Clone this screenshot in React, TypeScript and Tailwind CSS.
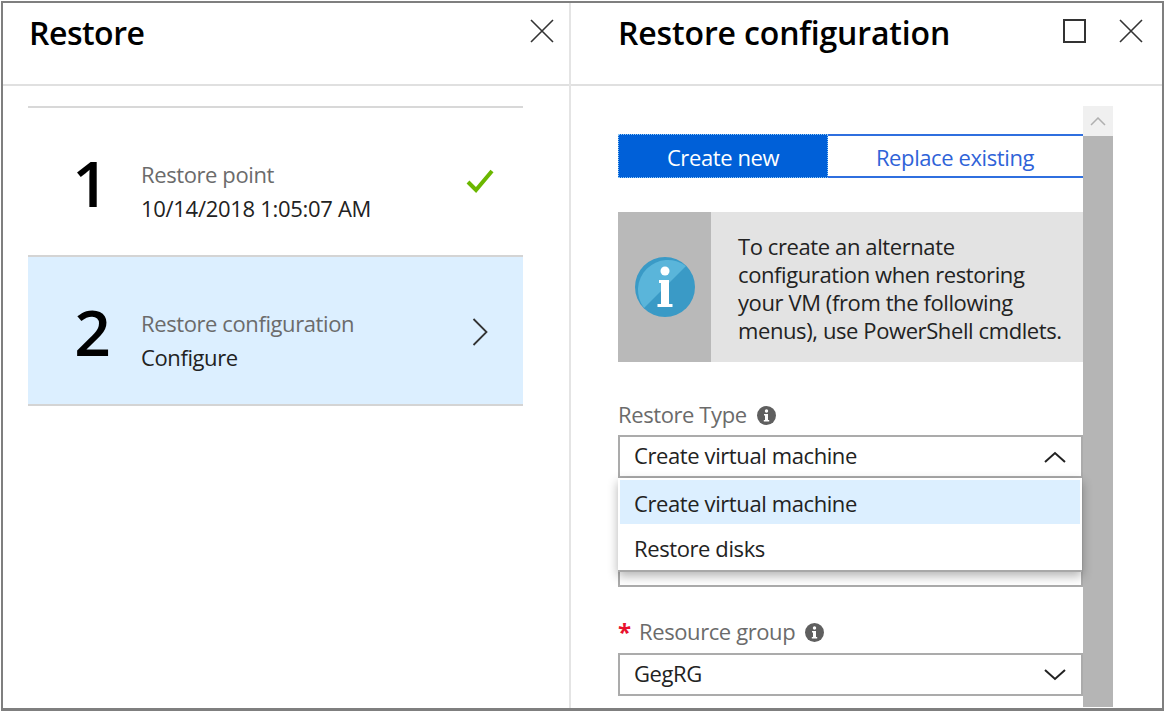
import React from "react";

const font = { fontFamily: '"Open Sans", "Noto Sans", sans-serif' };

const CloseIcon = () => (
  <svg width="24" height="24" viewBox="0 0 24 24" fill="none" stroke="#333" strokeWidth="1.6">
    <path d="M1 1l22 22M23 1L1 23" />
  </svg>
);

const Chevron = ({ up }: { up?: boolean }) => (
  <svg width="22" height="12" viewBox="0 0 22 12" fill="none" stroke="#222" strokeWidth="2">
    <path d={up ? "M1 11l10-9 10 9" : "M1 1l10 9 10-9"} />
  </svg>
);

const SmallInfo = () => (
  <svg width="19" height="19" viewBox="0 0 19 19">
    <circle cx="9.5" cy="9.5" r="9.5" fill="#5f5f5f" />
    <circle cx="9.5" cy="5" r="1.7" fill="#fff" />
    <path d="M7 8h4v6h1.2v1.6H6.8V14H8V9.6H7z" fill="#fff" />
  </svg>
);

const BigInfo = () => (
  <svg width="60" height="60" viewBox="0 0 60 60">
    <circle cx="30" cy="30" r="30" fill="#3a9ac6" />
    <path d="M9 51A30 30 0 0 1 51 9z" fill="#5ab5da" />
    <circle cx="30" cy="14" r="4.5" fill="#fff" />
    <path d="M24 23h10v24h3.5v3h-15v-3H26V26h-2z" fill="#fff" />
  </svg>
);

export default function App() {
  return (
    <div className="w-[1166px] h-[711px] bg-white pl-[1px] pt-[1px] pr-[2px]" style={font}>
      <div className="h-full bg-white flex overflow-hidden border-t-2 border-x-2 border-b-[3px] border-[#7f7f7f]">
        {/* left blade */}
        <div className="w-[568px] shrink-0 border-r-2 border-[#e4e4e4] flex flex-col">
          <div className="h-[83px] shrink-0 border-b-2 border-[#e0e0e0] pl-[26px] pr-[15px] flex justify-between">
            <h1 className="text-[32px] leading-[60px] font-semibold text-black tracking-[-0.5px]">Restore</h1>
            <div className="pt-[16px]"><CloseIcon /></div>
          </div>
          <div className="pt-[20px] pl-[25px] w-[520px]">
            <div className="border-t-2 border-[#d8d8d8] h-[149px] flex items-center">
              <div className="w-[113px] text-center text-[64px] leading-none font-semibold text-black pt-[2px] pl-[12px]">1</div>
              <div className="flex-1 pt-[18px]">
                <div className="text-[22px] leading-[34px] text-[#6b6b6b] tracking-[-0.4px]">Restore point</div>
                <div className="text-[22px] leading-[34px] text-[#222] tracking-[-0.3px]">10/14/2018 1:05:07 AM</div>
              </div>
              <svg className="mr-[29px] mb-[2px]" width="28" height="24" viewBox="0 0 28 24" fill="none" stroke="#6bb700" strokeWidth="4">
                <path d="M2 13l8 8L26 2" />
              </svg>
            </div>
            <div className="border-t-2 border-b-2 border-[#d4d4d4] h-[151px] bg-[#dcefff] flex items-center">
              <div className="w-[113px] text-center text-[64px] leading-none font-semibold text-black pt-[2px] pl-[16px]">2</div>
              <div className="flex-1 pt-[18px]">
                <div className="text-[22px] leading-[34px] text-[#6b6b6b] tracking-[-0.4px]">Restore configuration</div>
                <div className="text-[22px] leading-[34px] text-[#222] tracking-[-0.4px]">Configure</div>
              </div>
              <svg className="mr-[35px] mt-[2px]" width="16" height="28" viewBox="0 0 16 28" fill="none" stroke="#333" strokeWidth="1.8">
                <path d="M1.5 1l13 13-13 13" />
              </svg>
            </div>
          </div>
        </div>

        {/* right blade */}
        <div className="flex-1 flex flex-col min-w-0">
          <div className="h-[83px] shrink-0 border-b-2 border-[#e0e0e0] pl-[47px] pr-[19px] flex justify-between">
            <h1 className="text-[32px] leading-[60px] font-semibold text-black tracking-[-0.15px]">Restore configuration</h1>
            <div className="flex gap-[33px] pt-[16px]">
              <div className="w-[23px] h-[24px] border-2 border-[#333]" />
              <CloseIcon />
            </div>
          </div>
          <div className="flex pt-[20px] pl-[47px] flex-1 min-h-0">
            <div className="w-[465px] shrink-0 pt-[28px]">
              <div className="h-[44px] flex text-[22px] tracking-[-0.4px]">
                <div className="w-[210px] bg-[#0060d8] text-white flex items-center justify-center border border-dotted border-[#8fc8f5] pt-[2px]">Create new</div>
                <div className="flex-1 border-y-2 border-[#2f6fdf] text-[#2f63d8] flex items-center justify-center pt-[2px] pr-[1px]">Replace existing</div>
              </div>
              <div className="mt-[34px] h-[150px] flex bg-[#e3e3e3]">
                <div className="w-[93px] bg-[#b9b9b9] flex items-center justify-center"><BigInfo /></div>
                <div className="pl-[27px] pt-[20px] text-[22px] leading-[28px] text-[#222] tracking-[-0.4px]">
                  To create an alternate<br />configuration when restoring<br />your VM (from the following<br />menus), use PowerShell cmdlets.
                </div>
              </div>
              <div className="mt-[38px] h-[30px] flex items-center gap-[10px] text-[22px] text-[#6b6b6b] tracking-[-0.4px]">
                <span className="-translate-y-[1px]">Restore Type</span> <SmallInfo />
              </div>
              <div className="relative mt-[5px]">
                <div className="h-[43px] border-2 border-[#ababab] flex items-center justify-between pl-[14px] pr-[15px] text-[22px] text-[#222] tracking-[-0.4px]">
                  <span className="-translate-y-[1px]">Create virtual machine</span> <Chevron up />
                </div>
                <div className="h-[109px] border-2 border-t-0 border-[#ababab]" />
                <div className="absolute left-0 right-[1px] top-[43px] h-[94px] bg-white border-b-2 border-[#a8a8a8] px-[2px] pt-[2px] shadow-[0_4px_10px_rgba(0,0,0,0.3)] text-[22px] text-[#222] tracking-[-0.4px]">
                  <div className="h-[44px] bg-[#dcefff] pl-[14px] pt-[2px] flex items-center">Create virtual machine</div>
                  <div className="h-[46px] pl-[14px] pt-[2px] flex items-center">Restore disks</div>
                </div>
              </div>
              <div className="mt-[31px] h-[30px] flex items-center text-[22px] text-[#6b6b6b] tracking-[-0.4px]">
                <span className="w-[21px] text-[#e8112d] font-bold text-[24px] -translate-y-[1px]">*</span>
                <span className="-translate-y-[2px]">Resource group</span>
                <span className="ml-[10px] -translate-y-[1px]"><SmallInfo /></span>
              </div>
              <div className="mt-[5px] h-[43px] border-2 border-[#ababab] flex items-center justify-between pl-[14px] pr-[15px] text-[22px] text-[#222] tracking-[-0.4px]">
                <span className="-translate-y-[1px]">GegRG</span> <Chevron />
              </div>
            </div>
            <div className="w-[30px] shrink-0 flex flex-col mb-[1px]">
              <div className="h-[30px] bg-[#f0f0f0] flex items-center justify-center">
                <svg width="16" height="9" viewBox="0 0 16 9" fill="none" stroke="#b0b0b0" strokeWidth="1.5"><path d="M1 8l7-7 7 7" /></svg>
              </div>
              <div className="flex-1 bg-[#b5b5b5]" />
            </div>
          </div>
        </div>
      </div>
    </div>
  );
}
